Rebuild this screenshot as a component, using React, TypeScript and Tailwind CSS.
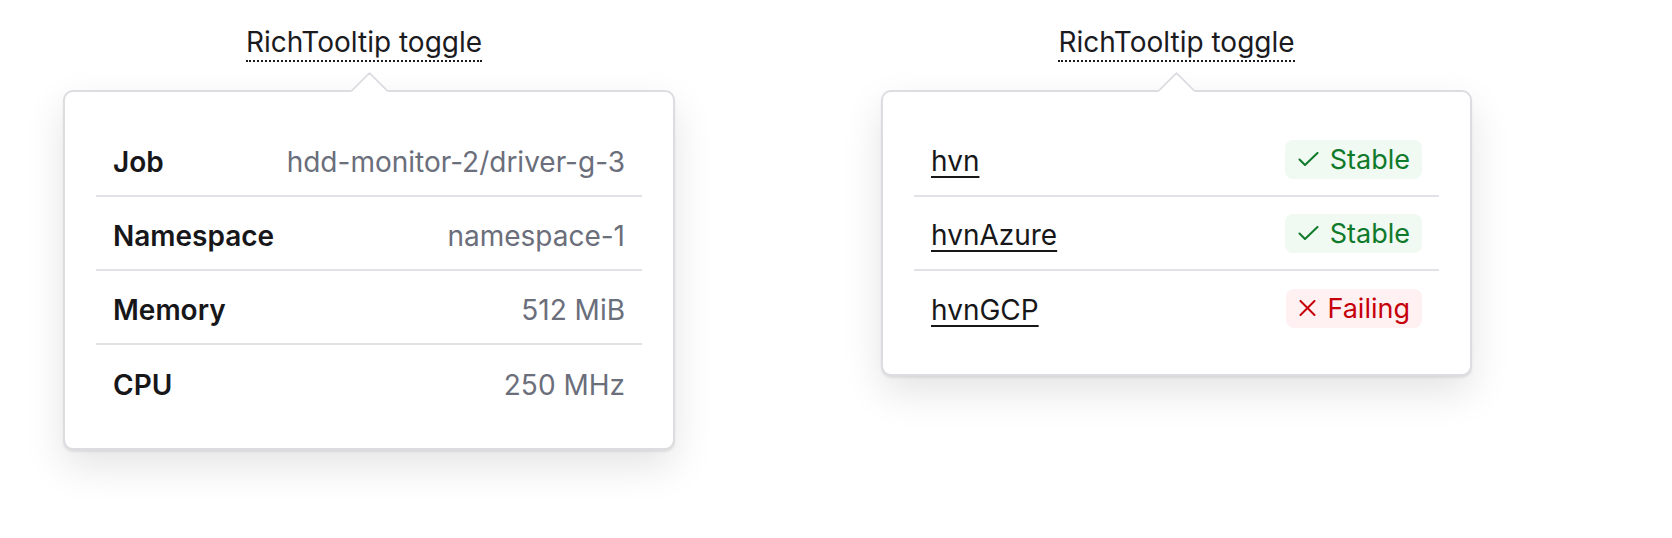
import React from "react";

const font = { fontFamily: "Inter, 'Noto Sans', 'Liberation Sans', sans-serif" };

function Toggle({ shift }: { shift?: boolean }) {
  return (
    <span
      className={`text-[28px] leading-[34px] text-[#1b1b1f] pb-[1px] border-b-2 border-dotted border-[#1b1b1f] ${
        shift ? "mr-[10px]" : ""
      }`}
    >
      RichTooltip toggle
    </span>
  );
}

function Card({ width, children }: { width: string; children: React.ReactNode }) {
  return (
    <div
      className={`relative ${width} bg-white border-2 border-[#dcdce1] rounded-[10px] px-[31px] pt-[31px] pb-[29px] shadow-[0_2px_2px_rgba(0,0,0,0.08),0_16px_40px_rgba(0,0,0,0.11)]`}
    >
      <div className="absolute left-1/2 top-[-15.5px] -ml-[13.5px] w-[27px] h-[27px] rotate-45 bg-white border-l-2 border-t-2 border-[#dcdce1] rounded-tl-[3px]" />
      <div className="flex flex-col">{children}</div>
    </div>
  );
}

function Row({ last, children }: { last?: boolean; children: React.ReactNode }) {
  return (
    <div
      className={`flex items-center justify-between h-[74px] px-[17px] ${last ? "" : "border-b-2 border-[#e1e1e6]"}`}
    >
      {children}
    </div>
  );
}

function Check() {
  return (
    <svg width="21" height="14" viewBox="0 0 21 14" fill="none" stroke="currentColor" strokeWidth="2" strokeLinecap="round" strokeLinejoin="round">
      <path d="M1.5 7.5 L7 13 L19.5 1" />
    </svg>
  );
}

function Cross() {
  return (
    <svg width="17" height="16" viewBox="0 0 17 16" fill="none" stroke="currentColor" strokeWidth="2" strokeLinecap="round">
      <path d="M1.5 1 L15.5 15 M15.5 1 L1.5 15" />
    </svg>
  );
}

function Badge({ ok }: { ok: boolean }) {
  return (
    <span
      className={`flex items-center gap-[11px] h-[39px] pl-[13px] pr-[12px] rounded-[8px] text-[27px] leading-[33px] ${
        ok ? "bg-[#f0f9f2] text-[#0f7a2a]" : "bg-[#fff1f1] text-[#c6000b]"
      }`}
    >
      {ok ? <Check /> : <Cross />}
      <span>{ok ? "Stable" : "Failing"}</span>
    </span>
  );
}

export default function App() {
  const rows1 = [
    ["Job", "hdd-monitor-2/driver-g-3"],
    ["Namespace", "namespace-1"],
    ["Memory", "512 MiB"],
    ["CPU", "250 MHz"],
  ];
  const rows2: [string, boolean][] = [
    ["hvn", true],
    ["hvnAzure", true],
    ["hvnGCP", false],
  ];
  return (
    <div className="w-[1672px] h-[538px] bg-white flex items-start pl-[63px] gap-[206px]" style={font}>
      <div className="flex flex-col items-center pt-[25px] gap-[28px]">
        <Toggle shift />
        <Card width="w-[612px]">
          {rows1.map(([k, v], i) => (
            <Row key={k} last={i === rows1.length - 1}>
              <span className="block pt-[6px] text-[28px] leading-[34px] font-semibold text-[#17171a]">{k}</span>
              <span className="block pt-[6px] text-[28px] leading-[34px] text-[#6b6e7b]">{v}</span>
            </Row>
          ))}
        </Card>
      </div>
      <div className="flex flex-col items-center pt-[25px] gap-[28px]">
        <Toggle />
        <Card width="w-[591px]">
          {rows2.map(([k, ok], i) => (
            <Row key={k} last={i === rows2.length - 1}>
              <span className="block pt-[4px]">
                <span className="text-[28px] leading-[34px] text-[#17171a] underline decoration-2 underline-offset-[5px]">{k}</span>
              </span>
              <Badge ok={ok} />
            </Row>
          ))}
        </Card>
      </div>
    </div>
  );
}
